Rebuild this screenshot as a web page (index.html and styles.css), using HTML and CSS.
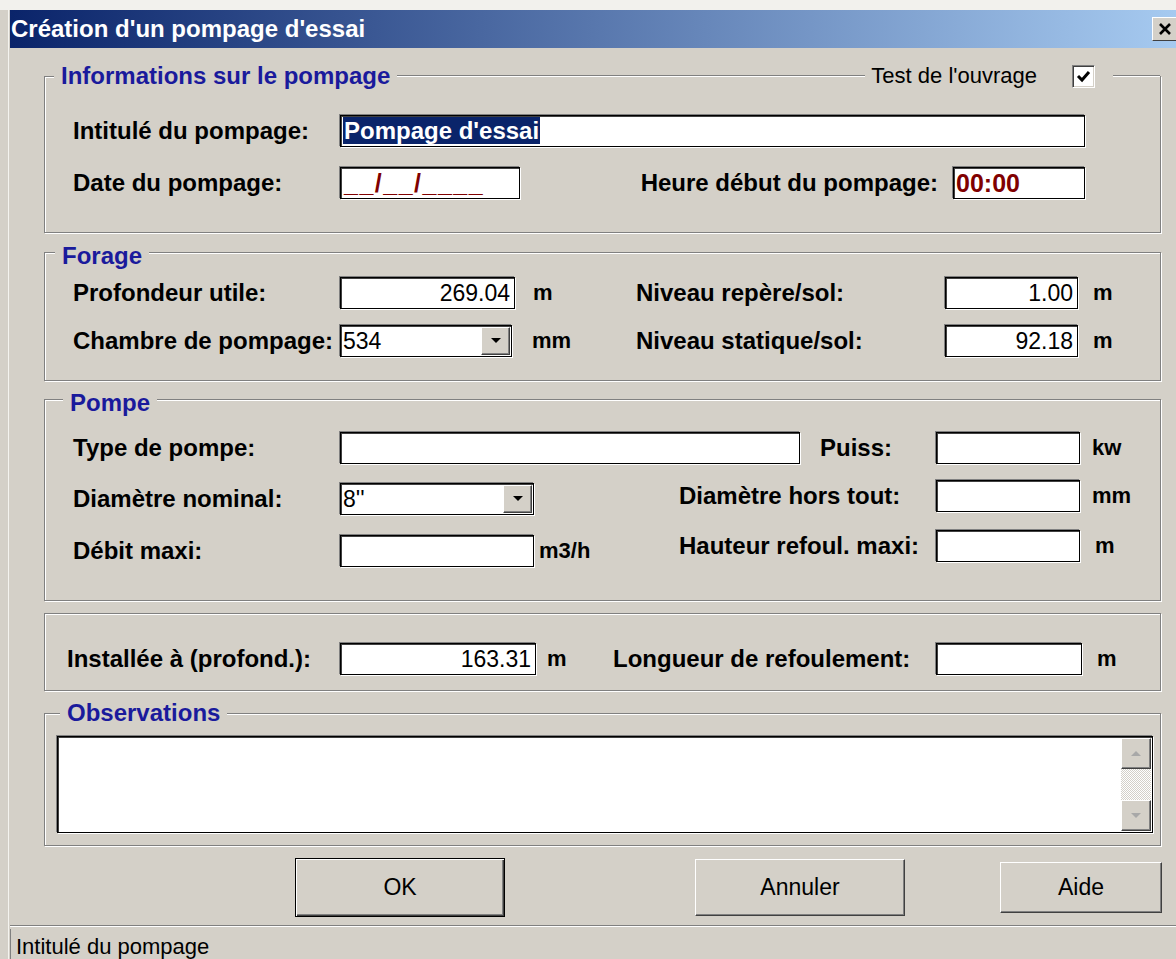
FILE: index.html
```html
<!DOCTYPE html>
<html lang="fr">
<head>
<meta charset="utf-8">
<title>Création d'un pompage d'essai</title>
<link rel="stylesheet" href="styles.css">
</head>
<body>
<div class="desk-edge"></div>
<div class="window">
  <header class="titlebar">
    <span class="caption">Création d'un pompage d'essai</span>
    <span class="close-btn">
      <svg width="14" height="14" viewBox="0 0 14 14"><path d="M2 2L12 12M12 2L2 12" stroke="#000" stroke-width="2.6" fill="none"/></svg>
    </span>
  </header>

  <div class="client">
    <!-- Informations sur le pompage -->
    <fieldset class="group group-info">
      <legend class="legend legend-wide">
        <span class="legend-bar">
          <span class="legend-title">Informations sur le pompage</span>
          <span class="legend-rule"></span>
          <span class="check-caption">Test de l'ouvrage</span>
          <span class="checkbox">
            <svg width="15" height="13" viewBox="0 0 15 13"><path d="M2 6L6 10L13 2" fill="none" stroke="#000" stroke-width="3"/></svg>
          </span>
          <span class="legend-rule legend-rule-tail"></span>
        </span>
      </legend>
      <div class="row">
        <span class="lbl lbl-main">Intitulé du pompage:</span>
        <span class="edit edit-title"><span class="sel">Pompage d'essai</span></span>
      </div>
      <div class="row">
        <span class="lbl lbl-main">Date du pompage:</span>
        <span class="edit edit-date mask">__/__/____</span>
        <span class="lbl lbl-heure">Heure début du pompage:</span>
        <span class="edit edit-heure mask">00:00</span>
      </div>
    </fieldset>

    <!-- Forage -->
    <fieldset class="group group-forage">
      <legend class="legend legend-low">Forage</legend>
      <div class="row">
        <div class="cell cell-left">
          <span class="lbl lbl-main">Profondeur utile:</span>
          <span class="edit edit-forage num">269.04</span>
          <span class="unit unit-forage">m</span>
        </div>
        <div class="cell">
          <span class="lbl lbl-niveau">Niveau repère/sol:</span>
          <span class="edit edit-niveau num">1.00</span>
          <span class="unit unit-m">m</span>
        </div>
      </div>
      <div class="row">
        <div class="cell cell-left">
          <span class="lbl lbl-main">Chambre de pompage:</span>
          <span class="combo combo-chambre">
            <span class="combo-text">534</span>
            <span class="combo-btn"><svg width="10" height="6" viewBox="0 0 10 6"><path d="M0 0H10L5 5Z" fill="#000"/></svg></span>
          </span>
          <span class="unit unit-mm">mm</span>
        </div>
        <div class="cell">
          <span class="lbl lbl-niveau">Niveau statique/sol:</span>
          <span class="edit edit-niveau num">92.18</span>
          <span class="unit unit-m">m</span>
        </div>
      </div>
    </fieldset>

    <!-- Pompe -->
    <fieldset class="group group-pompe">
      <legend class="legend legend-low">Pompe</legend>
      <div class="row">
        <span class="lbl lbl-main">Type de pompe:</span>
        <span class="edit edit-type"></span>
        <span class="lbl lbl-puiss">Puiss:</span>
        <span class="edit edit-pompe"></span>
        <span class="unit">kw</span>
      </div>
      <div class="pompe-cols">
        <div class="col col-left">
          <div class="row">
            <span class="lbl lbl-main">Diamètre nominal:</span>
            <span class="combo combo-diam">
              <span class="combo-text">8''</span>
              <span class="combo-btn"><svg width="10" height="6" viewBox="0 0 10 6"><path d="M0 0H10L5 5Z" fill="#000"/></svg></span>
            </span>
          </div>
          <div class="row">
            <span class="lbl lbl-main">Débit maxi:</span>
            <span class="edit edit-debit"></span>
            <span class="unit unit-debit">m3/h</span>
          </div>
        </div>
        <div class="col col-right">
          <div class="row">
            <span class="lbl lbl-pompe-r">Diamètre hors tout:</span>
            <span class="edit edit-pompe"></span>
            <span class="unit">mm</span>
          </div>
          <div class="row">
            <span class="lbl lbl-pompe-r">Hauteur refoul. maxi:</span>
            <span class="edit edit-pompe"></span>
            <span class="unit unit-m">m</span>
          </div>
        </div>
      </div>
    </fieldset>

    <!-- Installation -->
    <fieldset class="group group-install">
      <div class="row">
        <div class="cell cell-install">
          <span class="lbl lbl-install">Installée à (profond.):</span>
          <span class="edit edit-install num">163.31</span>
          <span class="unit unit-install">m</span>
        </div>
        <div class="cell">
          <span class="lbl lbl-refoul">Longueur de refoulement:</span>
          <span class="edit edit-refoul"></span>
          <span class="unit unit-m">m</span>
        </div>
      </div>
    </fieldset>

    <!-- Observations -->
    <fieldset class="group group-obs">
      <legend class="legend">Observations</legend>
      <div class="memo">
        <div class="memo-text"></div>
        <div class="scrollbar">
          <span class="scroll-btn"><svg width="10" height="6" viewBox="0 0 10 6"><path d="M0 5H10L5 0Z" fill="#a8a8a8"/></svg></span>
          <span class="scroll-track"></span>
          <span class="scroll-btn"><svg width="10" height="6" viewBox="0 0 10 6"><path d="M0 0H10L5 5Z" fill="#a8a8a8"/></svg></span>
        </div>
      </div>
    </fieldset>

    <div class="buttons">
      <button class="btn btn-ok" type="button">OK</button>
      <button class="btn btn-cancel" type="button">Annuler</button>
      <button class="btn btn-help" type="button">Aide</button>
    </div>
  </div>

  <footer class="statusbar">
    <div class="status-panel">Intitulé du pompage</div>
  </footer>
</div>
</body>
</html>
```

FILE: styles.css
```css
* { box-sizing: border-box; }

html, body { margin: 0; padding: 0; }

body {
  width: 1176px;
  height: 959px;
  overflow: hidden;
  background: #d4d0c8;
  font-family: "Liberation Sans", Arial, sans-serif;
  color: #000;
}

/* outer window frame */
.desk-edge { height: 10px; background: #f2f1ed; }

.window {
  margin-left: 8px;
  padding-left: 1px;
  border-left: 1px solid #f4f3ef;
}

.titlebar {
  display: flex;
  align-items: center;
  height: 38px;
  padding-left: 1px;
  background: linear-gradient(90deg, #0a246a 0%, #a6caf0 100%);
}

.caption {
  color: #fff;
  font-weight: bold;
  font-size: 24px;
  white-space: nowrap;
}

.close-btn {
  margin-left: auto;
  margin-right: -2px;
  width: 26px;
  height: 24px;
  display: flex;
  align-items: center;
  justify-content: center;
  background: #d4d0c8;
  border: 1px solid;
  border-color: #fff #404040 #404040 #fff;
}

/* dialog body */
.client { padding: 14px 0 0 34px; }

.group {
  width: 1117px;
  min-width: 0;
  margin: 0;
  padding: 0 0 0 28px;
  border: 1px solid #808080;
  box-shadow: inset 1px 1px 0 #fff, 1px 1px 0 #fff;
}

.legend {
  margin-left: -19px;
  padding: 0 7px;
  font-size: 24px;
  line-height: 28px;
  font-weight: bold;
  color: #1a1a9c;
  background: #d4d0c8;
}

/* caption sitting a little under the frame line */
.legend-low {
  padding-top: 8px;
  background: linear-gradient(transparent 8px, #d4d0c8 8px);
}

.legend-wide { width: 1106px; padding: 0; }

.legend-bar { display: flex; align-items: flex-start; }

.legend-title { padding: 0 7px; white-space: nowrap; }

.legend-rule {
  flex: 1;
  margin-top: 13px;
  height: 2px;
  border-top: 1px solid #808080;
  border-bottom: 1px solid #fff;
}

.legend-rule-tail { flex: none; width: 47px; margin-left: 18px; }

.check-caption {
  margin-left: 6px;
  font-weight: normal;
  font-size: 22px;
  color: #000;
  white-space: nowrap;
}

.checkbox {
  margin-left: 35px;
  margin-top: 3px;
  width: 23px;
  height: 23px;
  display: flex;
  align-items: center;
  justify-content: center;
  background: #fff;
  border: 1px solid;
  border-color: #808080 #fff #fff #808080;
  box-shadow: inset 1px 1px 0 #404040, inset -1px -1px 0 #d4d0c8;
}

/* rows and controls */
.row { display: flex; align-items: center; height: 32px; }
.cell { display: flex; align-items: center; }

.lbl {
  flex: none;
  font-weight: bold;
  font-size: 24px;
  line-height: 28px;
  white-space: nowrap;
}

.lbl-main { width: 267px; }

.edit, .combo {
  flex: none;
  height: 32px;
  background: #fff;
  border: 1px solid #000;
  box-shadow: inset 1px 1px 0 #404040, -1px -1px 0 #808080, 1px 1px 0 #fff;
  font-size: 23px;
  line-height: 28px;
  white-space: nowrap;
  overflow: hidden;
}

.edit { padding: 1px 4px; }
.num { text-align: right; }
.mask { color: #800000; font-weight: bold; font-size: 25px; }
.edit-date { letter-spacing: 1.5px; padding-left: 3px; }

.sel {
  background: #0a246a;
  color: #fff;
  font-weight: bold;
  font-size: 24px;
  padding: 0 1px;
}

.combo { display: flex; }
.combo-text { flex: 1; padding: 1px 2px; }
.combo-btn {
  flex: none;
  width: 29px;
  margin: 1px 1px 1px 0;
  display: flex;
  align-items: center;
  justify-content: center;
  background: #d4d0c8;
  border: 1px solid;
  border-color: #fff #404040 #404040 #fff;
  box-shadow: inset -1px -1px 0 #808080;
}

.unit {
  flex: none;
  margin-left: 12px;
  font-weight: bold;
  font-size: 22px;
}
.unit-m { margin-left: 15px; }

/* Informations */
.group-info { padding-top: 25px; padding-bottom: 33px; }
.group-info .row + .row { margin-top: 20px; }
.edit-title { width: 745px; padding-left: 2px; }
.edit-date { width: 180px; }
.lbl-heure { width: 433px; text-align: right; padding-right: 15px; }
.edit-heure { width: 132px; padding-left: 2px; }

/* Forage */
.group-forage { margin-top: 1px; padding-top: 7px; padding-bottom: 23px; }
.group-forage .legend { margin-left: -18px; }
.group-forage .row + .row { margin-top: 16px; }
.cell-left { width: 563px; }
.edit-forage { width: 175px; }
.unit-forage { margin-left: 18px; }
.combo-chambre { width: 172px; }
.unit-mm { margin-left: 20px; }
.lbl-niveau { width: 309px; }
.edit-niveau { width: 133px; }

/* Pompe */
.group-pompe { margin-top: 0; padding-top: 15px; padding-bottom: 33px; }
.group-pompe .legend { margin-left: -10px; }
.edit-type { width: 460px; }
.lbl-puiss { width: 116px; margin-left: 20px; }
.edit-pompe { width: 144px; }
.pompe-cols { display: flex; align-items: flex-start; }
.col { display: flex; flex-direction: column; }
.col-left { width: 606px; margin-top: 19px; gap: 20px; }
.col-right { margin-top: 16px; gap: 18px; }
.combo-diam { width: 194px; }
.edit-debit { width: 194px; }
.unit-debit { margin-left: 5px; }
.lbl-pompe-r { width: 257px; }

/* Installation */
.group-install { margin-top: 12px; padding: 29px 0 15px 22px; }
.cell-install { width: 546px; }
.lbl-install { width: 273px; }
.edit-install { width: 196px; }
.unit-install { margin-left: 11px; }
.lbl-refoul { width: 323px; }
.edit-refoul { width: 146px; }

/* Observations */
.group-obs { margin-top: 8px; padding: 9px 0 12px 12px; }
.group-obs .legend { margin-left: 3px; }

.memo {
  display: flex;
  width: 1096px;
  height: 97px;
  background: #fff;
  border: 1px solid #000;
  box-shadow: inset 1px 1px 0 #404040, -1px -1px 0 #808080, 1px 1px 0 #fff;
}
.memo-text { flex: 1; }

.scrollbar {
  flex: none;
  width: 30px;
  margin: 1px 1px 1px 0;
  display: flex;
  flex-direction: column;
}
.scroll-btn {
  flex: none;
  height: 31px;
  display: flex;
  align-items: center;
  justify-content: center;
  background: #d4d0c8;
  border: 1px solid;
  border-color: #fff #404040 #404040 #fff;
  box-shadow: inset -1px -1px 0 #808080;
}
.scroll-track {
  flex: 1;
  background: repeating-conic-gradient(#fff 0 25%, #d4d0c8 0 50%) 0 0 / 2px 2px;
}

/* push buttons */
.buttons { display: flex; align-items: center; height: 59px; margin-top: 12px; }

.btn {
  flex: none;
  display: flex;
  align-items: center;
  justify-content: center;
  padding: 0;
  font-family: inherit;
  font-size: 23px;
  color: #000;
  background: #d4d0c8;
  border: 1px solid;
  border-color: #fff #404040 #404040 #fff;
  box-shadow: inset -1px -1px 0 #808080;
}

.btn-ok {
  width: 210px;
  height: 59px;
  margin-left: 251px;
  border-color: #000;
  box-shadow: inset 1px 1px 0 #fff, inset -1px -1px 0 #404040, inset -2px -2px 0 #808080;
}
.btn-cancel { width: 210px; height: 57px; margin-left: 190px; }
.btn-help { width: 162px; height: 51px; margin-left: 95px; }

/* status bar */
.statusbar {
  margin-top: 8px;
  height: 40px;
  padding-top: 3px;
  border-top: 1px solid #808080;
  box-shadow: inset 0 1px 0 #fff;
}

.status-panel {
  height: 37px;
  padding-left: 5px;
  border-left: 1px solid #808080;
  font-size: 22px;
  line-height: 36px;
  white-space: nowrap;
}
```
